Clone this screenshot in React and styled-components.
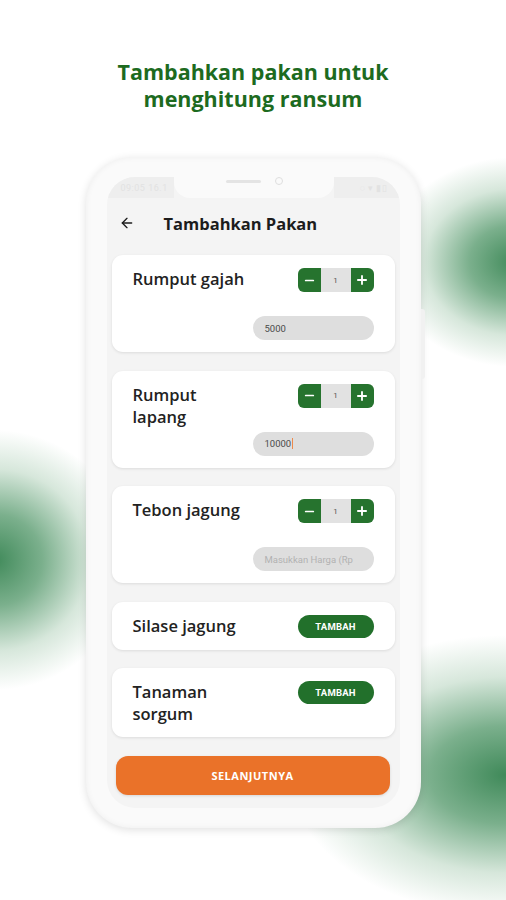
import React from "react";
import styled, { createGlobalStyle } from "styled-components";
import { ArrowLeft, Minus, Plus } from "lucide-react";

const GlobalStyle = createGlobalStyle`
  html, body { margin: 0; padding: 0; background: #ffffff; }
  * { box-sizing: border-box; }
  body { font-family: "Open Sans", "Noto Sans", sans-serif; }
`;

const GREEN = "#26732e";

const Page = styled.div`
  width: 506px;
  height: 900px;
  overflow: hidden;
  display: flex;
  flex-direction: column;
  align-items: center;
  padding-top: 58px;
  background:
    radial-gradient(ellipse 130px 105px at 515px 262px, rgba(48,128,76,0.92) 0%, rgba(60,138,86,0.68) 35%, rgba(120,175,135,0.3) 70%, rgba(255,255,255,0) 100%),
    radial-gradient(ellipse 135px 130px at -5px 560px, rgba(48,128,76,0.92) 0%, rgba(60,138,86,0.68) 35%, rgba(120,175,135,0.3) 70%, rgba(255,255,255,0) 100%),
    radial-gradient(ellipse 215px 140px at 505px 775px, rgba(48,128,76,0.92) 0%, rgba(60,138,86,0.68) 35%, rgba(120,175,135,0.3) 70%, rgba(255,255,255,0) 100%),
    #ffffff;
`;

const Title = styled.h1`
  margin: 0;
  font-family: "Open Sans", "Noto Sans", sans-serif;
  font-weight: 700;
  font-size: 21.5px;
  line-height: 27px;
  color: #1d6b1f;
  text-align: center;
`;

const Phone = styled.div`
  position: relative;
  margin-top: 45px;
  width: 335px;
  height: 671px;
  border-radius: 46px;
  background: #fafafa;
  box-shadow: 0 2px 8px rgba(0,0,0,0.12), inset 0 0 6px rgba(0,0,0,0.05);
  padding: 20px 21px 20px;
  display: flex;
  &::after {
    content: "";
    position: absolute;
    right: -4px;
    top: 152px;
    width: 4px;
    height: 70px;
    border-radius: 0 3px 3px 0;
    background: #f1f1f1;
  }
`;

const Screen = styled.div`
  flex: 1;
  border-radius: 28px;
  background: #f4f4f4;
  overflow: hidden;
  display: flex;
  flex-direction: column;
`;

const StatusBar = styled.div`
  height: 21px;
  display: flex;
`;

const Ear = styled.div`
  flex: 1;
  background: #eeeeee;
  display: flex;
  align-items: center;
  justify-content: ${p => (p.$right ? "flex-end" : "flex-start")};
  padding: 0 ${p => (p.$right ? "12px" : "0")} 0 ${p => (p.$right ? "0" : "14px")};
  font-family: Roboto, sans-serif;
  font-size: 9px;
  color: #e2e2e2;
  letter-spacing: 0.5px;
`;

const Notch = styled.div`
  width: 160px;
  background: #fafafa;
  border-radius: 0 0 16px 16px;
  display: flex;
  align-items: flex-start;
  justify-content: center;
  gap: 14px;
  padding-top: 2px;
`;

const Speaker = styled.div`
  width: 35px;
  height: 3px;
  margin-top: 1px;
  border-radius: 2px;
  background: #e4e4e4;
`;

const Camera = styled.div`
  width: 8px;
  height: 8px;
  margin-top: -2px;
  border-radius: 50%;
  border: 1.3px solid #dedede;
`;

const Header = styled.div`
  height: 50px;
  display: flex;
  align-items: center;
  padding-left: 12px;
  gap: 29px;
  color: #1c1c1c;
`;

const HeaderTitle = styled.div`
  font-family: "Open Sans", sans-serif;
  font-weight: 700;
  font-size: 16.5px;
  color: #1c1c1c;
`;

const List = styled.div`
  display: flex;
  flex-direction: column;
  gap: 18.5px;
  padding: 7px 5px 0;
`;

const Card = styled.div`
  background: #ffffff;
  border-radius: 11px;
  box-shadow: 0 1px 3px rgba(0,0,0,0.1);
  padding: 13px 21px 12px;
  display: grid;
  grid-template-columns: 1fr auto;
  column-gap: 8px;
`;

const Name = styled.div`
  grid-row: 1 / span 2;
  font-family: "Open Sans", sans-serif;
  font-weight: 600;
  font-size: 16.5px;
  line-height: 22px;
  color: #222222;
  white-space: pre;
`;

const Stepper = styled.div`
  grid-column: 2;
  justify-self: end;
  width: 76px;
  height: 24px;
  border-radius: 6px;
  overflow: hidden;
  display: flex;
  background: #e2e2e2;
`;

const StepBtn = styled.div`
  width: 23px;
  height: 100%;
  background: ${GREEN};
  color: #ffffff;
  display: flex;
  align-items: center;
  justify-content: center;
`;

const StepValue = styled.div`
  flex: 1;
  display: flex;
  align-items: center;
  justify-content: center;
  font-family: Roboto, sans-serif;
  font-size: 8px;
  color: #555555;
`;

const PriceInput = styled.div`
  grid-column: 2;
  justify-self: end;
  margin-top: 24px;
  width: 121px;
  height: 24px;
  border-radius: 12px;
  background: #dedede;
  display: flex;
  align-items: center;
  padding-left: 12px;
  font-family: Roboto, sans-serif;
  font-size: 9.5px;
  color: ${p => (p.$placeholder ? "#b2b2b2" : "#4a4a4a")};
  white-space: nowrap;
  overflow: hidden;
`;

const Caret = styled.span`
  display: inline-block;
  width: 1.5px;
  height: 11px;
  margin-left: 0.5px;
  background: #ee8a4c;
  vertical-align: middle;
`;

const AddButton = styled.div`
  grid-column: 2;
  justify-self: end;
  width: 76px;
  height: 23px;
  border-radius: 12px;
  background: #22702b;
  color: #ffffff;
  display: flex;
  align-items: center;
  justify-content: center;
  font-family: Roboto, sans-serif;
  font-weight: 700;
  font-size: 9.5px;
  letter-spacing: 0.2px;
`;

const NextButton = styled.div`
  margin: 19px 10px 0 9px;
  height: 39px;
  border-radius: 12px;
  background: #ea7229;
  box-shadow: 0 1px 3px rgba(0,0,0,0.12);
  color: #ffffff;
  display: flex;
  align-items: center;
  justify-content: center;
  font-family: "Open Sans", sans-serif;
  font-weight: 700;
  font-size: 11px;
  letter-spacing: 0.5px;
`;

const items = [
  { name: "Rumput gajah", type: "step", value: "5000" },
  { name: "Rumput\nlapang", type: "step", value: "10000", caret: true },
  { name: "Tebon jagung", type: "step", placeholder: "Masukkan Harga (Rp" },
  { name: "Silase jagung", type: "add" },
  { name: "Tanaman\nsorgum", type: "add" },
];

function FeedCard({ item }) {
  return (
    <Card>
      <Name>{item.name}</Name>
      {item.type === "step" ? (
        <>
          <Stepper>
            <StepBtn><Minus size={13} strokeWidth={3.2} /></StepBtn>
            <StepValue>1</StepValue>
            <StepBtn><Plus size={14} strokeWidth={3.2} /></StepBtn>
          </Stepper>
          <PriceInput $placeholder={!item.value}>
            {item.value || item.placeholder}
            {item.caret && <Caret />}
          </PriceInput>
        </>
      ) : (
        <AddButton>TAMBAH</AddButton>
      )}
    </Card>
  );
}

export default function App() {
  return (
    <>
      <GlobalStyle />
      <Page>
        <Title>
          Tambahkan pakan untuk
          <br />
          menghitung ransum
        </Title>
        <Phone>
          <Screen>
            <StatusBar>
              <Ear>09:05 16.1</Ear>
              <Notch>
                <Speaker />
                <Camera />
              </Notch>
              <Ear $right>◌ ▾ ▮▯</Ear>
            </StatusBar>
            <Header>
              <ArrowLeft size={16} strokeWidth={2} />
              <HeaderTitle>Tambahkan Pakan</HeaderTitle>
            </Header>
            <List>
              {items.map((it, i) => (
                <FeedCard key={i} item={it} />
              ))}
            </List>
            <NextButton>SELANJUTNYA</NextButton>
          </Screen>
        </Phone>
      </Page>
    </>
  );
}
